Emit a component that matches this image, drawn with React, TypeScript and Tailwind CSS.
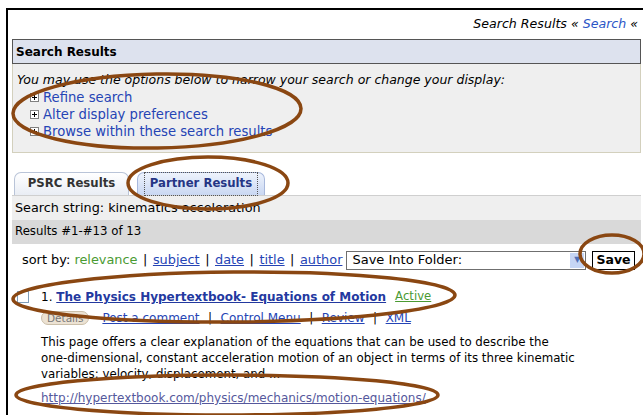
import React from "react";

const font = { fontFamily: '"DejaVu Sans", Verdana, sans-serif' };

const PlusBox = () => (
  <svg width="9" height="9" viewBox="0 0 9 9" className="mr-[4px] shrink-0">
    <rect x="0.5" y="0.5" width="8" height="8" fill="#fff" stroke="#808080" />
    <path d="M2 4.5h5M4.5 2v5" stroke="#000" strokeWidth="1" />
  </svg>
);

const Sep = ({ wide = false }: { wide?: boolean }) => (
  <span className={wide ? "px-[8.5px] text-black" : "px-[5.5px] text-black"}>|</span>
);

// brown marker rings drawn over the page
const Rings = () => (
  <svg
    className="pointer-events-none absolute left-0 top-0"
    width="643"
    height="415"
    viewBox="0 0 643 415"
    fill="none"
    stroke="#8a4712"
    strokeWidth="3.5"
  >
    <ellipse cx="157" cy="111" rx="144" ry="37" transform="rotate(-1 157 111)" />
    <ellipse cx="208" cy="183" rx="80" ry="26" />
    <ellipse cx="612" cy="254" rx="32" ry="19" />
    <ellipse cx="234" cy="297" rx="221" ry="25" transform="rotate(-0.5 234 297)" />
    <ellipse cx="227" cy="395" rx="211" ry="20" />
  </svg>
);

export default function App() {
  return (
    <div className="relative h-[415px] w-[643px] overflow-hidden bg-white text-[11px] text-black" style={font}>
      <div className="ml-[6px] mt-[8px] h-[420px] border-l-2 border-t-2 border-black pl-[4px] pr-[2px]">
        {/* breadcrumb */}
        <div className="flex h-[29px] items-center justify-end pr-[3px] text-[12.6px] italic">
          <span>Search Results</span>
          <span className="px-[4px]">«</span>
          <span className="text-[#2b56c6]">Search</span>
          <span className="pl-[4px]">«</span>
        </div>

        {/* options panel */}
        <div>
          <div className="flex h-[25px] items-center border border-[#555] bg-[#dde2ee] px-[3px] text-[12px] font-bold">
            Search Results
          </div>
          <div className="h-[89px] border border-t-0 border-[#d3d0bd] bg-[#efefef] px-[4px] pt-[8px]">
            <p className="text-[12.5px] italic leading-[16px]">
              You may use the options below to narrow your search or change your display:
            </p>
            <ul className="mt-[1px] pl-[13px] text-[13.2px] leading-[17px] text-[#2544b5]">
              <li className="flex items-center"><PlusBox />Refine search</li>
              <li className="flex items-center"><PlusBox />Alter display preferences</li>
              <li className="flex items-center"><PlusBox />Browse within these search results</li>
            </ul>
          </div>
        </div>

        {/* tabs */}
        <div className="mt-[19px] flex items-end gap-[8px] border-b border-[#cfcfcf] pl-[2px] text-[11.7px]">
          <div className="flex h-[23px] w-[115px] items-center justify-center rounded-t-[7px] border border-b-0 border-[#b9c4d8] bg-gradient-to-b from-white to-[#e9edf4] font-bold text-[#333]">
            PSRC Results
          </div>
          <div className="flex h-[23px] w-[128px] items-center justify-center rounded-t-[7px] border border-b-0 border-[#a8b8dc] bg-gradient-to-b from-[#eef3fc] to-[#c9d7f2] font-bold text-[#253585]">
            <span className="px-[5px] py-[2px] outline-1 outline-dotted outline-[#555]">Partner Results</span>
          </div>
        </div>

        <div className="flex h-[24px] items-center bg-[#efefef] pl-[3px] text-[12.8px]">
          Search string: kinematics acceleration
        </div>
        <div className="flex h-[24px] items-center bg-[#d9d9d9] pl-[3px] text-[11.75px]">Results #1-#13 of 13</div>

        {/* sort + folder */}
        <div className="mt-[6px] flex h-[20px] items-center pl-[10px] text-[12.9px]">
          <span>sort by:&nbsp;</span>
          <span className="text-[#4a9a32]">relevance</span>
          <Sep />
          <span className="text-[#2544b5] underline">subject</span>
          <Sep />
          <span className="text-[#2544b5] underline">date</span>
          <Sep />
          <span className="text-[#2544b5] underline">title</span>
          <Sep />
          <span className="text-[#2544b5] underline">author</span>
          <div className="ml-[4px] flex h-[19px] w-[240px] items-center border border-[#6f6f6f] bg-white pl-[5px] text-[13px]">
            <span className="flex-1">Save Into Folder:</span>
            <span className="mr-[1px] flex h-[15px] w-[14px] items-center justify-center bg-[#c5d5f5] text-[8px] text-[#4d6fb8]">▼</span>
          </div>
          <button className="ml-[6px] h-[19px] border border-black bg-white px-[3px] text-[12.5px] font-bold leading-none">Save</button>
        </div>

        {/* result */}
        <div className="mt-[18px] flex items-center">
          <span className="ml-[5px] h-[12px] w-[12px] border border-[#7f9db9] bg-white" />
          <span className="ml-[12px] text-[12px]">1.&nbsp;</span>
          <span className="text-[12px] font-bold text-[#23399f] underline">The Physics Hypertextbook- Equations of Motion</span>
          <span className="ml-[9px] text-[11.7px] text-[#4a9a32] underline">Active</span>
        </div>
        <div className="mt-[3px] flex items-center pl-[29px] text-[12px]">
          <span className="rounded-full border border-[#cbbfa9] bg-[#ece2d3] px-[5px] text-[10.5px] leading-[12px] text-[#777]">Details</span>
          <span className="ml-[13px] text-[#2544b5] underline">Post a comment</span>
          <Sep wide />
          <span className="text-[#2544b5] underline">Control Menu</span>
          <Sep wide />
          <span className="text-[#2544b5] underline">Review</span>
          <Sep wide />
          <span className="text-[#2544b5] underline">XML</span>
        </div>
        <p className="mt-[7px] pl-[29px] text-[11.8px] leading-[16px]">
          This page offers a clear explanation of the equations that can be used to describe the
          <br />
          one-dimensional, constant acceleration motion of an object in terms of its three kinematic
          <br />
          variables: velocity, displacement, and ...
        </p>
        <p className="mt-[8px] pl-[29px] text-[12px] leading-[16px] text-[#55589c] underline">
          http://hypertextbook.com/physics/mechanics/motion-equations/
        </p>
      </div>
      <Rings />
    </div>
  );
}
